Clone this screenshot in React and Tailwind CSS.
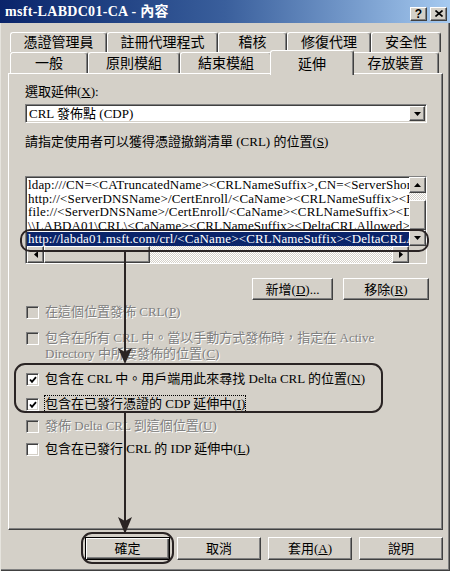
import React from 'react';

const raised =
  'bg-[#d4d0c8] border border-t-white border-l-white border-r-[#404040] border-b-[#404040] shadow-[inset_-1px_-1px_#808080]';
const sunken =
  'border border-t-[#808080] border-l-[#808080] border-r-white border-b-white shadow-[inset_1px_1px_#404040,inset_-1px_-1px_#d4d0c8]';
const disabledText = 'text-[#808080] [text-shadow:1px_1px_0_#fff]';

const row1 = [
  { label: '憑證管理員', w: 'w-[97px]' },
  { label: '註冊代理程式', w: 'w-[111px]' },
  { label: '稽核', w: 'w-[69px]' },
  { label: '修復代理', w: 'w-[84px]' },
  { label: '安全性', w: 'w-[70px]' },
];

const row2 = [
  { label: '一般', w: 'w-[78px]' },
  { label: '原則模組', w: 'w-[92px]' },
  { label: '結束模組', w: 'w-[92px]' },
  { label: '延伸', w: 'w-[84px]', active: true },
  { label: '存放裝置', w: 'w-[87px]' },
];

const locations = [
  'ldap:///CN=<CATruncatedName><CRLNameSuffix>,CN=<ServerShortName>,CN=CDP,CN=Public Key Services',
  'http://<ServerDNSName>/CertEnroll/<CaName><CRLNameSuffix><DeltaCRLAllowed>.crl',
  'file://<ServerDNSName>/CertEnroll/<CaName><CRLNameSuffix><DeltaCRLAllowed>.crl',
  '\\\\LABDA01\\CRL\\<CaName><CRLNameSuffix><DeltaCRLAllowed>.crl',
  'http://labda01.msft.com/crl/<CaName><CRLNameSuffix><DeltaCRLAllowed>.crl',
];

function Arrow({ dir }) {
  const pts = {
    up: '0,4 3.5,0 7,4',
    down: '0,0 7,0 3.5,4',
    left: '4,0 4,7 0,3.5',
    right: '0,0 0,7 4,3.5',
  }[dir];
  const vertical = dir === 'up' || dir === 'down';
  return (
    <svg width={vertical ? 7 : 4} height={vertical ? 4 : 7} viewBox={vertical ? '0 0 7 4' : '0 0 4 7'}>
      <polygon points={pts} fill="#000" />
    </svg>
  );
}

function CheckBox({ checked, disabled }) {
  return (
    <span
      className={`w-[13px] h-[13px] shrink-0 flex items-center justify-center ${sunken} ${
        disabled ? 'bg-[#d4d0c8]' : 'bg-white'
      }`}
    >
      {checked && (
        <svg width="8" height="8" viewBox="0 0 8 8">
          <polyline points="1,3.5 3,5.8 7,1.2" fill="none" stroke="#000" strokeWidth="1.8" />
        </svg>
      )}
    </span>
  );
}

function Option({ checked, disabled, focus, children, className = '' }) {
  return (
    <div className={`flex items-start gap-[6px] ml-[1px] text-[13px] leading-[16px] ${className}`}>
      <span className="pt-[2px]">
        <CheckBox checked={checked} disabled={disabled} />
      </span>
      <span
        className={`${disabled ? disabledText : 'text-black'} ${
          focus ? 'outline-1 outline-dotted outline-black' : ''
        }`}
      >
        {children}
      </span>
    </div>
  );
}

function Button({ children, className = '' }) {
  return (
    <div className={`flex items-center justify-center text-[13px] leading-none ${raised} ${className}`}>
      {children}
    </div>
  );
}

function Tab({ label, w, active }) {
  if (active) {
    return (
      <div
        className={`relative z-10 -mx-[2px] -mt-[2px] h-[25px] ${w} flex items-start justify-center pt-[3px] bg-[#d4d0c8] border-t border-l border-t-white border-l-white border-r border-r-[#404040] shadow-[inset_-1px_0_#808080] rounded-t-[3px] text-[14px]`}
      >
        {label}
      </div>
    );
  }
  return (
    <div
      className={`h-full ${w} flex items-center justify-center bg-[#d4d0c8] border-t border-l border-t-white border-l-white border-r border-r-[#404040] shadow-[inset_-1px_0_#808080] rounded-t-[3px] text-[14px]`}
    >
      {label}
    </div>
  );
}

function ListBox() {
  return (
    <div className={`mt-[26px] w-[402px] h-[88px] bg-white flex flex-col ${sunken}`}>
      <div className="flex flex-1 min-h-0 pl-[1px]">
        <div className="flex-1 min-w-0 overflow-hidden pt-[1px]">
          {locations.map((loc, i) => (
            <div
              key={loc}
              className={`h-[13.6px] leading-[14px] whitespace-nowrap overflow-hidden text-[13px] tracking-[0.15px] px-[1px] ${
                i === locations.length - 1 ? 'bg-[#0a246a] text-white' : 'text-black'
              }`}
            >
              {loc}
            </div>
          ))}
        </div>
        <div className="w-[17px] flex flex-col bg-[repeating-conic-gradient(#fff_0_25%,#d4d0c8_0_50%)] bg-[length:2px_2px]">
          <div className={`h-[16px] flex items-center justify-center ${raised}`}>
            <Arrow dir="up" />
          </div>
          <div className="h-[7px]" />
          <div className={`flex-1 ${raised}`} />
          <div className={`h-[16px] flex items-center justify-center ${raised}`}>
            <Arrow dir="down" />
          </div>
        </div>
      </div>
      <div className="flex h-[17px] pl-[1px]">
        <div className="flex-1 flex bg-[repeating-conic-gradient(#fff_0_25%,#d4d0c8_0_50%)] bg-[length:2px_2px]">
          <div className={`w-[17px] flex items-center justify-center ${raised}`}>
            <Arrow dir="left" />
          </div>
          <div className={`w-[106px] ${raised}`} />
          <div className="flex-1" />
          <div className={`w-[17px] flex items-center justify-center ${raised}`}>
            <Arrow dir="right" />
          </div>
        </div>
        <div className="w-[17px] bg-[#d4d0c8]" />
      </div>
    </div>
  );
}

function Annotations() {
  const ink = '#2a2424';
  return (
    <svg className="absolute inset-0 pointer-events-none" width="450" height="571" viewBox="0 0 450 571">
      <g fill="none" stroke={ink} strokeWidth="2">
        <rect x="21" y="230" width="407" height="21" rx="9" />
        <rect x="15" y="364" width="367" height="48" rx="10" />
        <rect x="82" y="533" width="91" height="30" rx="10" />
        <line x1="125" y1="251" x2="125" y2="352" />
        <line x1="125" y1="412" x2="125" y2="522" />
      </g>
      <polygon points="118,348 125,352 132,348 125,364" fill={ink} />
      <polygon points="118,517 125,521 132,517 125,534" fill={ink} />
    </svg>
  );
}

export default function App() {
  return (
    <div className="relative w-[450px] h-[571px] bg-[#d4d0c8] overflow-hidden text-black font-['Liberation_Serif','Noto_Sans_CJK_TC',serif] shadow-[inset_1px_0_#e6e4de,inset_-1px_-1px_#404040,inset_-2px_-2px_#808080]">
      {/* Title bar */}
      <div className="h-[23px] flex items-center justify-between pl-[5px] pr-[3px] bg-gradient-to-r from-[#0a246a] via-[#3a5f9c] to-[#a6caf0]">
        <span className="text-white font-bold text-[14px] leading-none tracking-[0.3px]">
          msft-LABDC01-CA - 內容
        </span>
        <div className="flex items-center gap-[3px] mt-[4px]">
          <div className={`w-[17px] h-[14px] flex items-center justify-center text-[12px] font-bold font-['Liberation_Sans',sans-serif] ${raised}`}>
            ?
          </div>
          <div className={`w-[17px] h-[14px] flex items-center justify-center ${raised}`}>
            <svg width="8" height="7" viewBox="0 0 8 7">
              <path d="M0.5 0.5 L7.5 6.5 M7.5 0.5 L0.5 6.5" stroke="#000" strokeWidth="1.6" />
            </svg>
          </div>
        </div>
      </div>

      {/* Tabs */}
      <div className="ml-[10px] mt-[9px] flex h-[20px]">
        {row1.map((t) => (
          <Tab key={t.label} {...t} />
        ))}
      </div>
      <div className="ml-[10px] flex h-[21px]">
        {row2.map((t) => (
          <Tab key={t.label} {...t} />
        ))}
      </div>

      {/* Panel */}
      <div className="ml-[8px] w-[435px] h-[457px] pl-[16px] pt-[10px] border border-t-white border-l-white border-r-[#404040] border-b-[#404040] shadow-[inset_-1px_-1px_#808080]">
        <div className="text-[13px] leading-[16px]">
          選取延伸(<span className="underline">X</span>):
        </div>
        <div className={`mt-[4px] w-[402px] h-[19px] bg-white flex items-center justify-between pl-[3px] pr-[1px] ${sunken}`}>
          <span className="text-[13px] leading-none">CRL 發佈點 (CDP)</span>
          <div className={`w-[16px] h-[15px] flex items-center justify-center ${raised}`}>
            <Arrow dir="down" />
          </div>
        </div>
        <div className="mt-[11px] text-[13px] leading-[16px]">
          請指定使用者可以獲得憑證撤銷清單 (CRL) 的位置(<span className="underline">S</span>)
        </div>

        <ListBox />

        <div className="w-[404px] mt-[14px] flex justify-end gap-[10px]">
          <Button className="w-[81px] h-[22px]">
            新增(<span className="underline">D</span>)...
          </Button>
          <Button className="w-[86px] h-[22px]">
            移除(<span className="underline">R</span>)
          </Button>
        </div>

        <Option disabled className="mt-[4px]">
          在這個位置發佈 CRL(<span className="underline">P</span>)
        </Option>
        <Option disabled className="mt-[10px] leading-[14px]">
          包含在所有 CRL 中。當以手動方式發佈時，指定在 Active
          <br />
          Directory 中所要發佈的位置(<span className="underline">C</span>)
        </Option>
        <Option checked className="mt-[9px]">
          包含在 CRL 中。用戶端用此來尋找 Delta CRL 的位置(<span className="underline">N</span>)
        </Option>
        <Option checked focus className="mt-[9px]">
          包含在已發行憑證的 CDP 延伸中(<span className="underline">I</span>)
        </Option>
        <Option disabled className="mt-[6px]">
          發佈 Delta CRL 到這個位置(<span className="underline">U</span>)
        </Option>
        <Option className="mt-[7px]">
          包含在已發行 CRL 的 IDP 延伸中(<span className="underline">L</span>)
        </Option>
      </div>

      {/* Dialog buttons */}
      <div className="ml-[85px] mt-[7px] flex gap-[7px]">
        <div className="w-[85px] h-[23px] flex items-center justify-center text-[13px] leading-none bg-[#d4d0c8] border border-black shadow-[inset_1px_1px_#fff,inset_-1px_-1px_#404040,inset_-2px_-2px_#808080]">
          確定
        </div>
        <Button className="w-[84px] h-[23px]">取消</Button>
        <Button className="w-[84px] h-[23px]">
          套用(<span className="underline">A</span>)
        </Button>
        <Button className="w-[84px] h-[23px]">說明</Button>
      </div>

      <Annotations />
    </div>
  );
}
